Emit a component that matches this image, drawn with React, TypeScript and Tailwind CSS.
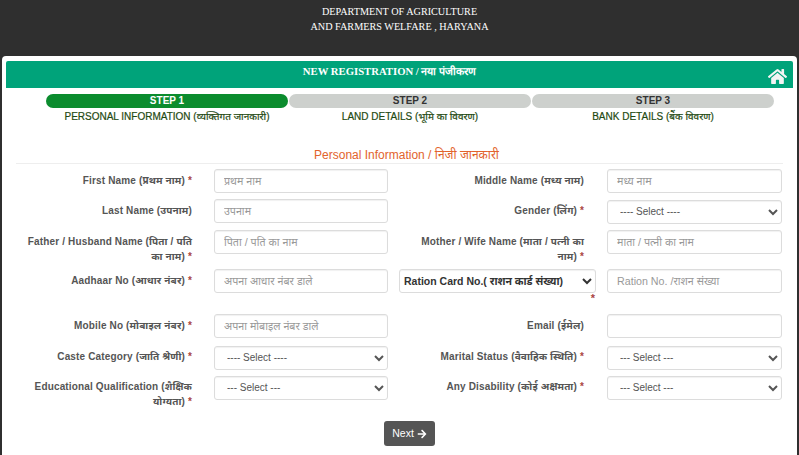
import { FaArrowRight, FaHome } from "react-icons/fa";

const inputClass =
  "h-[24px] w-full rounded-[3px] border border-[#dcdcdc] bg-white px-[9px] text-[10.7px] text-[#555] shadow-[inset_0_1px_1px_rgba(0,0,0,0.06)] outline-none placeholder:text-[#999]";

const selectClass =
  "h-[24px] w-full rounded-[3px] border border-[#dcdcdc] bg-white pl-[8px] text-[10px] text-[#555] shadow-[inset_0_1px_1px_rgba(0,0,0,0.06)] outline-none";

const steps = [
  { name: "STEP 1", sub: "PERSONAL INFORMATION (व्यक्तिगत जानकारी)", active: true },
  { name: "STEP 2", sub: "LAND DETAILS (भूमि का विवरण)", active: false },
  { name: "STEP 3", sub: "BANK DETAILS (बैंक विवरण)", active: false },
];

type FieldProps = {
  label: string;
  required?: boolean;
  placeholder?: string;
  options?: string;
  right?: boolean;
};

const Field = ({ label, required, placeholder, options, right }: FieldProps) => {
  return (
    <div className={right ? "flex items-start pl-[2px]" : "flex items-start"}>
      <label
        className={
          right
            ? "w-[186px] pt-[6px] pr-[1px] pl-[18px] text-right text-[10px] leading-[14.5px] font-bold tracking-[0.15px] text-[#555]"
            : "w-[190px] pl-[20px] pt-[6px] text-right text-[10px] leading-[14.5px] font-bold tracking-[0.15px] text-[#555]"
        }
      >
        {label}
        {required && <span className="ml-[3px] text-[#a94442]">*</span>}
      </label>
      <div className={right ? "ml-[22px] w-[175px]" : "ml-[22px] w-[174px]"}>
        {options ? (
          <select className={selectClass} defaultValue={options}>
            <option>{options}</option>
          </select>
        ) : (
          <input className={inputClass} placeholder={placeholder} />
        )}
      </div>
    </div>
  );
};

const App = () => {
  return (
    <div
      className="h-[455px] w-[799px] overflow-hidden bg-[#2f2f2f]"
      style={{ fontFamily: '"Liberation Sans", "Noto Sans", sans-serif' }}
    >
      {/* 상단 타이틀 */}
      <div
        className="h-[56px] pt-[5px] text-center text-[10.2px] leading-[14.5px] text-white"
        style={{ fontFamily: '"Liberation Serif", serif' }}
      >
        <div>DEPARTMENT OF AGRICULTURE</div>
        <div>AND FARMERS WELFARE , HARYANA</div>
      </div>

      <div className="mx-[2px] h-[399px] rounded-t-[4px] bg-white pt-[5px]">
        {/* 초록 헤더 */}
        <div className="relative mx-[4px] h-[27px] rounded-t-[2px] bg-[#00a37a] pt-[3px] pr-[20px] text-center text-[10.7px] leading-[14px] font-bold text-white">
          <span style={{ fontFamily: '"Liberation Serif", serif' }}>
            NEW REGISTRATION / नया पंजीकरण
          </span>
          <FaHome className="absolute top-[6px] right-[6px] text-[19px] text-[#f4f4f4]" />
        </div>

        {/* 단계 표시 */}
        <div className="mt-[6px] ml-[44px] grid w-[728px] grid-cols-3 gap-x-[1px]">
          {steps.map(step => (
            <div key={step.name} className="text-center">
              <div
                className={
                  step.active
                    ? "h-[14px] rounded-full bg-[#0b8c2e] text-[10px] leading-[14px] font-bold text-white"
                    : "h-[14px] rounded-full bg-[#cdd0cd] text-[10px] leading-[14px] font-bold text-[#333]"
                }
              >
                {step.name}
              </div>
              <div className="mt-[2px] text-[10px] leading-[14px] text-[#1f4a12] [-webkit-text-stroke:0.2px_#1f4a12]">
                {step.sub}
              </div>
            </div>
          ))}
        </div>

        {/* 개인 정보 */}
        <div className="mt-[24px] ml-[14px] w-[767px] border-b border-[#eeeeee] pl-[14px] text-center text-[12px] leading-[15px] text-[#e2632c]">
          Personal Information / निजी जानकारी
        </div>

        <div className="mt-[4px] grid grid-cols-[395px_1fr] auto-rows-min">
          <div className="h-[30px]">
            <Field label="First Name (प्रथम नाम)" required placeholder="प्रथम नाम" />
          </div>
          <div className="h-[30px]">
            <Field label="Middle Name (मध्य नाम)" placeholder="मध्य नाम" right />
          </div>
          <div className="h-[31px]">
            <Field label="Last Name (उपनाम)" placeholder="उपनाम" />
          </div>
          <div className="h-[31px]">
            <Field label="Gender (लिंग)" required options="---- Select ----" right />
          </div>
          <div className="h-[39px]">
            <Field label="Father / Husband Name (पिता / पति का नाम)" required placeholder="पिता / पति का नाम" />
          </div>
          <div className="h-[39px]">
            <Field label="Mother / Wife Name (माता / पत्नी का नाम)" required placeholder="माता / पत्नी का नाम" right />
          </div>
          <div className="h-[45px]">
            <Field label="Aadhaar No (आधार नंबर)" required placeholder="अपना आधार नंबर डाले" />
          </div>
          <div className="flex h-[45px] items-start pl-[2px]">
            <div className="w-[197px] text-right">
              <select
                className="h-[24px] w-full rounded-[3px] border border-[#dcdcdc] bg-white text-[10.5px] font-bold text-[#333] shadow-[inset_0_1px_1px_rgba(0,0,0,0.06)] outline-none"
                defaultValue="Ration Card No.( राशन कार्ड संख्या)"
              >
                <option>Ration Card No.( राशन कार्ड संख्या)</option>
              </select>
              <span className="mr-[1px] block text-[11px] leading-[11px] font-bold text-[#a94442]">*</span>
            </div>
            <div className="ml-[11px] w-[175px]">
              <input className={inputClass} placeholder="Ration No. /राशन संख्या" />
            </div>
          </div>
          <div className="h-[31px]">
            <Field label="Mobile No (मोबाइल नंबर)" required placeholder="अपना मोबाइल नंबर डाले" />
          </div>
          <div className="h-[31px]">
            <Field label="Email (ईमेल)" right />
          </div>
          <div className="h-[30px]">
            <Field label="Caste Category (जाति श्रेणी)" required options="---- Select ----" />
          </div>
          <div className="h-[30px]">
            <Field label="Marital Status (वैवाहिक स्थिति)" required options="--- Select ---" right />
          </div>
          <div className="h-[47px]">
            <Field label="Educational Qualification (शैक्षिक योग्यता)" required options="--- Select ---" />
          </div>
          <div className="h-[47px]">
            <Field label="Any Disability (कोई अक्षमता)" required options="--- Select ---" right />
          </div>
        </div>

        <div className="ml-[382px]">
          <button className="flex h-[25px] w-[51px] items-center justify-center gap-[3px] rounded-[3px] bg-[#555] text-[10.5px] text-white">
            Next <FaArrowRight className="text-[10px]" />
          </button>
        </div>
      </div>
    </div>
  );
};

export default App;
